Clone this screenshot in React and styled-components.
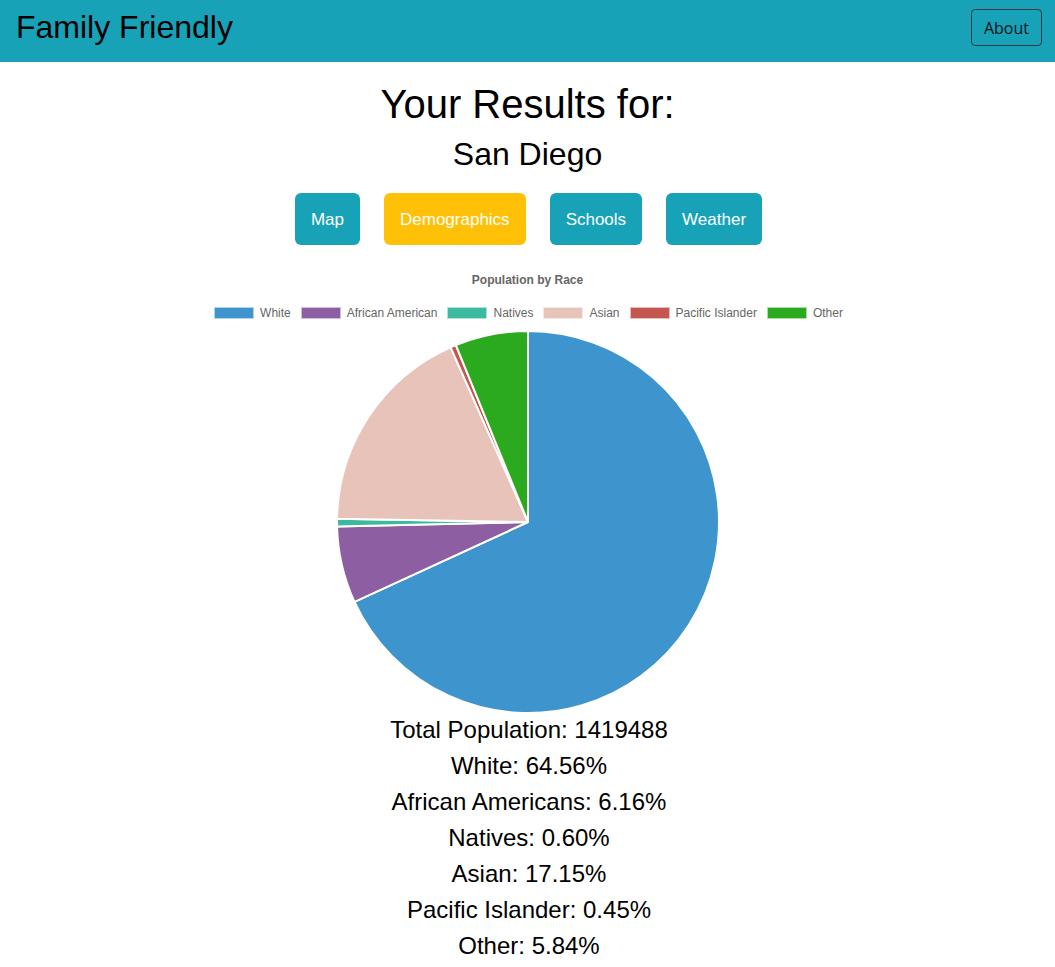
import React from 'react';
import styled, { createGlobalStyle } from 'styled-components';

const GlobalStyle = createGlobalStyle`
  body {
    margin: 0;
    background: #fff;
    font-family: 'Liberation Sans', Arial, sans-serif;
    color: #000;
  }
`;

const Header = styled.header`
  height: 62px;
  background: #17a2b8;
  display: flex;
  justify-content: space-between;
  align-items: flex-start;
  padding: 0 13px 0 16px;
  box-sizing: border-box;
`;

const Brand = styled.div`
  margin-top: 8px;
  font-size: 32px;
  line-height: 1.2;
  color: #000;
`;

const AboutButton = styled.button`
  margin-top: 9px;
  height: 37px;
  padding: 0 12px;
  background: transparent;
  border: 1px solid #343a40;
  border-radius: 4px;
  font-family: 'Open Sans', sans-serif;
  font-size: 16px;
  color: #111;
  cursor: pointer;
`;

const Main = styled.main`
  display: flex;
  flex-direction: column;
  align-items: center;
  text-align: center;
`;

const Heading = styled.h1`
  margin: 18px 0 0;
  font-size: 40px;
  font-weight: 400;
  line-height: 1.2;
`;

const City = styled.h2`
  margin: 7px 0 0;
  font-size: 32px;
  font-weight: 400;
  line-height: 1.2;
`;

const Tabs = styled.nav`
  margin-top: 20px;
  display: flex;
  gap: 24px;
  margin-left: 2px;
`;

const Tab = styled.button`
  height: 52px;
  padding: 2px 16px 0;
  border: none;
  border-radius: 6px;
  background: ${(p) => (p.active ? '#ffc107' : '#17a2b8')};
  color: #fff;
  font-family: 'Liberation Sans', Arial, sans-serif;
  font-size: 17px;
  cursor: pointer;
`;

const ChartTitle = styled.div`
  margin-top: 28px;
  font-size: 12px;
  line-height: 14px;
  font-weight: 700;
  color: #666;
`;

const Legend = styled.div`
  margin-top: 20px;
  margin-left: 2px;
  display: flex;
  gap: 10px;
  height: 12px;
  align-items: center;
`;

const LegendItem = styled.div`
  display: flex;
  align-items: center;
  gap: 6px;
  font-size: 12px;
  color: #666;
`;

const Swatch = styled.span`
  width: 40px;
  height: 12px;
  box-sizing: border-box;
  background: ${(p) => p.color};
  border: 1px solid rgba(255, 255, 255, 0.6);
`;

const Pie = styled.svg`
  margin-top: 11px;
  overflow: visible;
  display: block;
`;

const Stats = styled.div`
  margin-top: 1px;
  margin-left: 3px;
  font-size: 24px;
  line-height: 36px;
`;

const data = [
  { label: 'White', value: 64.56, color: '#3e95cd' },
  { label: 'African American', value: 6.16, color: '#8e5ea2' },
  { label: 'Natives', value: 0.6, color: '#3cba9f' },
  { label: 'Asian', value: 17.15, color: '#e8c3b9' },
  { label: 'Pacific Islander', value: 0.45, color: '#c45850' },
  { label: 'Other', value: 5.84, color: '#2caa1f' },
];

function slicePath(cx, cy, r, a0, a1) {
  const x0 = cx + r * Math.cos(a0);
  const y0 = cy + r * Math.sin(a0);
  const x1 = cx + r * Math.cos(a1);
  const y1 = cy + r * Math.sin(a1);
  const large = a1 - a0 > Math.PI ? 1 : 0;
  return `M${cx},${cy} L${x0},${y0} A${r},${r} 0 ${large} 1 ${x1},${y1} Z`;
}

function PieChart() {
  const total = data.reduce((s, d) => s + d.value, 0);
  const cx = 192;
  const cy = 192;
  const r = 191;
  let angle = -Math.PI / 2;
  return (
    <Pie width="384" height="381">
      {data.map((d) => {
        const start = angle;
        angle += (d.value / total) * Math.PI * 2;
        return (
          <path
            key={d.label}
            d={slicePath(cx, cy, r, start, angle)}
            fill={d.color}
            stroke="#fff"
            strokeWidth="2"
            strokeLinejoin="bevel"
          />
        );
      })}
    </Pie>
  );
}

export default function App() {
  return (
    <>
      <GlobalStyle />
      <Header>
        <Brand>Family Friendly</Brand>
        <AboutButton>About</AboutButton>
      </Header>
      <Main>
        <Heading>Your Results for:</Heading>
        <City>San Diego</City>
        <Tabs>
          <Tab>Map</Tab>
          <Tab active>Demographics</Tab>
          <Tab>Schools</Tab>
          <Tab>Weather</Tab>
        </Tabs>
        <ChartTitle>Population by Race</ChartTitle>
        <Legend>
          {data.map((d) => (
            <LegendItem key={d.label}>
              <Swatch color={d.color} />
              {d.label}
            </LegendItem>
          ))}
        </Legend>
        <PieChart />
        <Stats>
          <div>Total Population: 1419488</div>
          <div>White: 64.56%</div>
          <div>African Americans: 6.16%</div>
          <div>Natives: 0.60%</div>
          <div>Asian: 17.15%</div>
          <div>Pacific Islander: 0.45%</div>
          <div>Other: 5.84%</div>
        </Stats>
      </Main>
    </>
  );
}
